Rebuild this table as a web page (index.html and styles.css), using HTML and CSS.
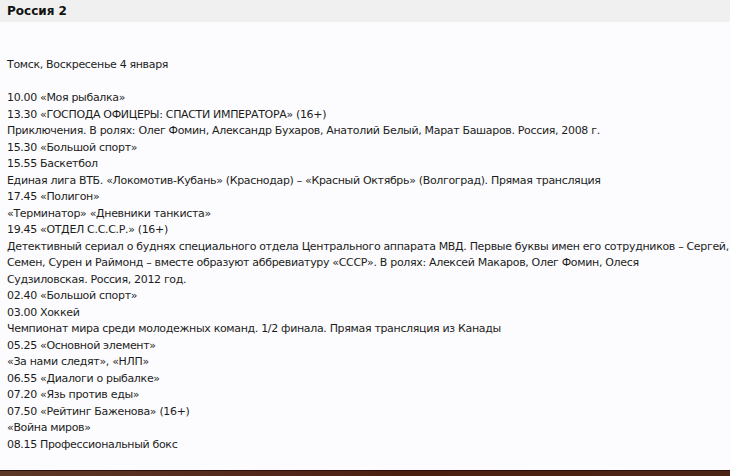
FILE: index.html
```html
<!DOCTYPE html>
<html lang="ru">
<head>
<meta charset="utf-8">
<title>Россия 2</title>
<link rel="stylesheet" href="styles.css">
</head>
<body>
<div class="page">
  <div class="header">Россия 2</div>
  <div class="content">
    <p class="city">Томск, Воскресенье 4 января</p>
    <div class="list">
      <div>10.00 «Моя рыбалка»</div>
      <div>13.30 «ГОСПОДА ОФИЦЕРЫ: СПАСТИ ИМПЕРАТОРА» (16+)</div>
      <div>Приключения. В ролях: Олег Фомин, Александр Бухаров, Анатолий Белый, Марат Башаров. Россия, 2008 г.</div>
      <div>15.30 «Большой спорт»</div>
      <div>15.55 Баскетбол</div>
      <div>Единая лига ВТБ. «Локомотив-Кубань» (Краснодар) – «Красный Октябрь» (Волгоград). Прямая трансляция</div>
      <div>17.45 «Полигон»</div>
      <div>«Терминатор» «Дневники танкиста»</div>
      <div>19.45 «ОТДЕЛ С.С.С.Р.» (16+)</div>
      <div>Детективный сериал о буднях специального отдела Центрального аппарата МВД. Первые буквы имен его сотрудников – Сергей, Семен, Сурен и Раймонд – вместе образуют аббревиатуру «СССР». В ролях: Алексей Макаров, Олег Фомин, Олеся Судзиловская.&nbsp;Россия, 2012&nbsp;год.</div>
      <div>02.40 «Большой спорт»</div>
      <div>03.00 Хоккей</div>
      <div>Чемпионат мира среди молодежных команд. 1/2 финала. Прямая трансляция из Канады</div>
      <div>05.25 «Основной элемент»</div>
      <div>«За нами следят», «НЛП»</div>
      <div>06.55 «Диалоги о рыбалке»</div>
      <div>07.20 «Язь против еды»</div>
      <div>07.50 «Рейтинг Баженова» (16+)</div>
      <div>«Война миров»</div>
      <div>08.15 Профессиональный бокс</div>
    </div>
  </div>
  <div class="footer"></div>
</div>
</body>
</html>
```

FILE: styles.css
```css
html, body {
  margin: 0;
  padding: 0;
  background: #fcfcfe;
}
.page {
  width: 730px;
  height: 476px;
  display: flex;
  flex-direction: column;
  overflow: hidden;
  font-family: "DejaVu Sans", Verdana, sans-serif;
  font-size: 11px;
  line-height: 16.5px;
  letter-spacing: -0.33px;
  color: #1c1c1c;
}
.header {
  height: 22px;
  flex: none;
  background: #f0f0f0;
  font-weight: bold;
  font-size: 12px;
  line-height: 22px;
  letter-spacing: 0;
  padding-left: 7px;
  color: #111;
}
.content {
  flex: 1;
  padding: 35px 0 0 7px;
}
.city {
  margin: 0 0 16.5px 0;
}
.footer {
  flex: none;
  height: 5px;
  border-top: 1px solid #2a1208;
  background: linear-gradient(90deg, #5e3826 0%, #52261a 40%, #4c2010 55%, #4c2416 100%);
}
```
